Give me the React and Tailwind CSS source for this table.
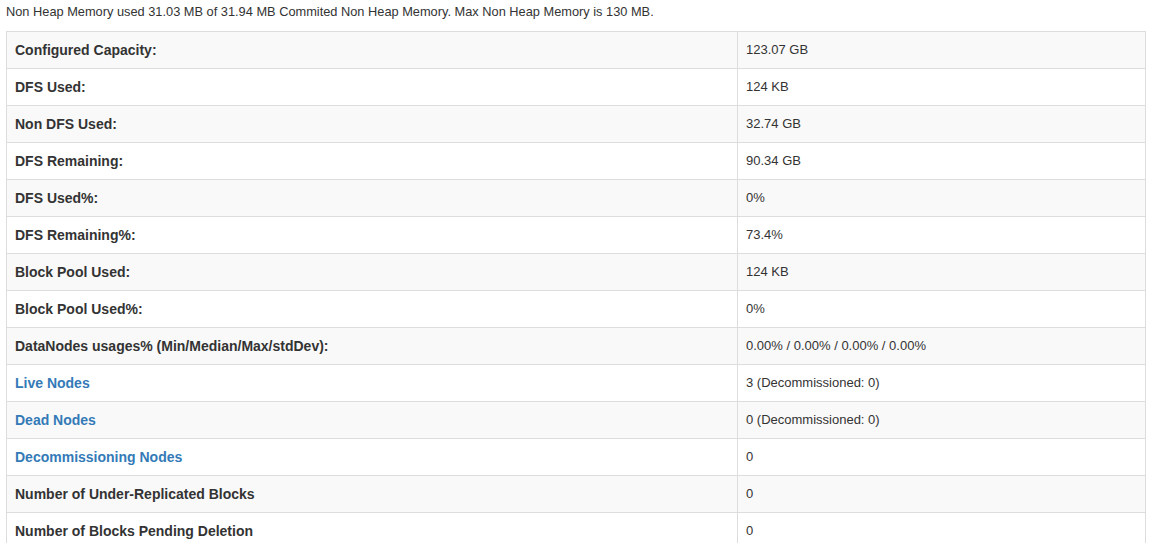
import React from 'react';

const rows = [
  ['Configured Capacity:', '123.07 GB'],
  ['DFS Used:', '124 KB'],
  ['Non DFS Used:', '32.74 GB'],
  ['DFS Remaining:', '90.34 GB'],
  ['DFS Used%:', '0%'],
  ['DFS Remaining%:', '73.4%'],
  ['Block Pool Used:', '124 KB'],
  ['Block Pool Used%:', '0%'],
  ['DataNodes usages% (Min/Median/Max/stdDev):', '0.00% / 0.00% / 0.00% / 0.00%'],
  ['Live Nodes', '3 (Decommissioned: 0)', true],
  ['Dead Nodes', '0 (Decommissioned: 0)', true],
  ['Decommissioning Nodes', '0', true],
  ['Number of Under-Replicated Blocks', '0'],
  ['Number of Blocks Pending Deletion', '0'],
];

export default function App() {
  return (
    <div className="min-h-screen bg-white text-[#333] font-['Liberation_Sans',Arial,sans-serif]">
      <div className="px-[6px] pt-[3px] h-[31px] text-[12.8px] leading-[17px]">
        Non Heap Memory used 31.03 MB of 31.94 MB Commited Non Heap Memory. Max Non Heap Memory is 130 MB.
      </div>
      <div className="px-[6px]">
        <table className="w-[1140px] border-collapse border border-[#ddd] text-[14px] leading-[20px]">
          <tbody>
            {rows.map(([label, value, link], i) => (
              <tr key={label} className={i % 2 === 0 ? 'bg-[#f9f9f9]' : 'bg-white'}>
                <th className="w-[731px] border border-[#ddd] px-[8px] py-[8px] text-left font-bold">
                  {link ? (
                    <a href="#" className="text-[#337ab7]">{label}</a>
                  ) : (
                    label
                  )}
                </th>
                <td className="border border-[#ddd] px-[8px] py-[8px] text-[13px]">{value}</td>
              </tr>
            ))}
          </tbody>
        </table>
      </div>
    </div>
  );
}
